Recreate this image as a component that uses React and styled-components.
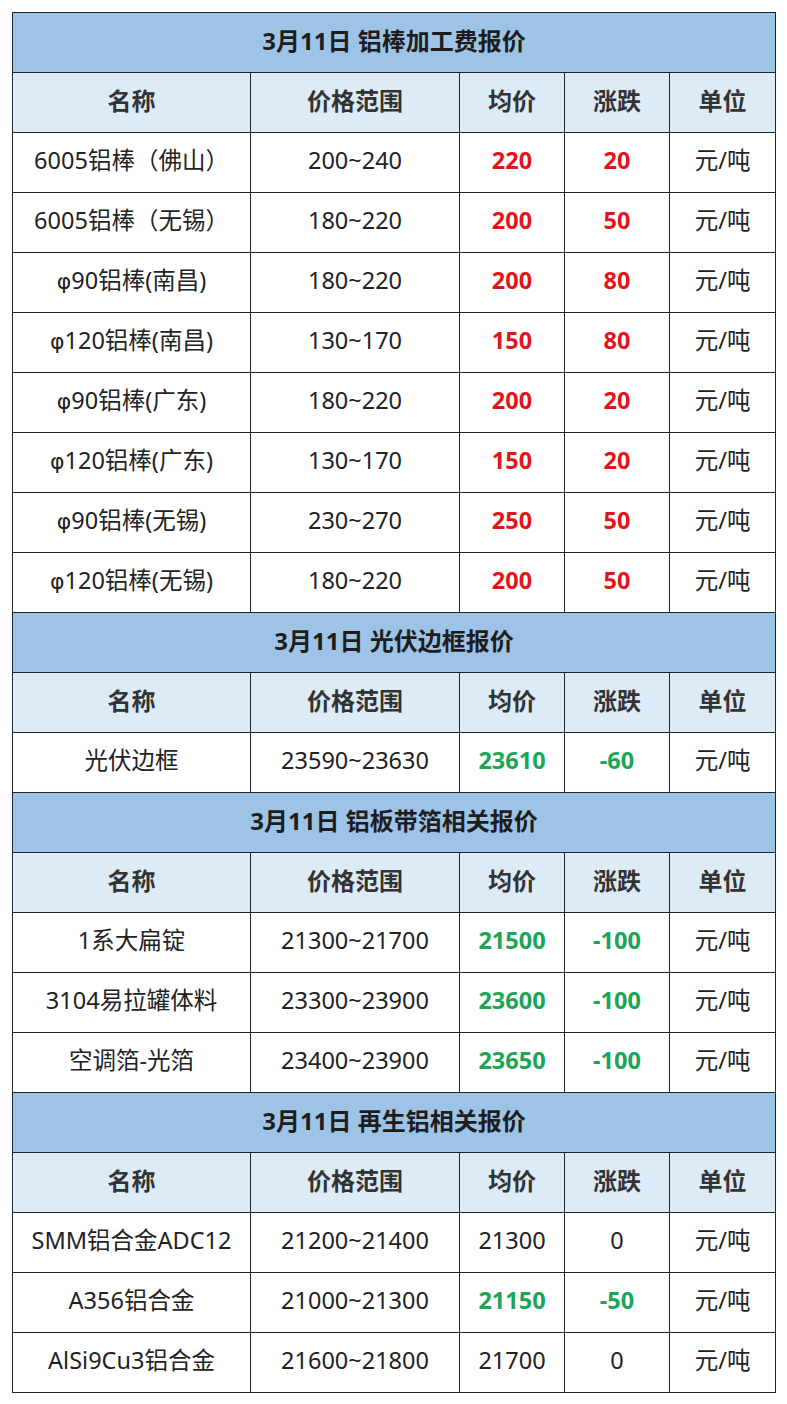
import React from "react";
import styled, { createGlobalStyle } from "styled-components";

const sections = [
  {
    title: "3月11日 铝棒加工费报价",
    rows: [
      ["6005铝棒（佛山）", "200~240", "220", "20", "up"],
      ["6005铝棒（无锡）", "180~220", "200", "50", "up"],
      ["φ90铝棒(南昌)", "180~220", "200", "80", "up"],
      ["φ120铝棒(南昌)", "130~170", "150", "80", "up"],
      ["φ90铝棒(广东)", "180~220", "200", "20", "up"],
      ["φ120铝棒(广东)", "130~170", "150", "20", "up"],
      ["φ90铝棒(无锡)", "230~270", "250", "50", "up"],
      ["φ120铝棒(无锡)", "180~220", "200", "50", "up"],
    ],
  },
  {
    title: "3月11日 光伏边框报价",
    rows: [["光伏边框", "23590~23630", "23610", "-60", "down"]],
  },
  {
    title: "3月11日 铝板带箔相关报价",
    rows: [
      ["1系大扁锭", "21300~21700", "21500", "-100", "down"],
      ["3104易拉罐体料", "23300~23900", "23600", "-100", "down"],
      ["空调箔-光箔", "23400~23900", "23650", "-100", "down"],
    ],
  },
  {
    title: "3月11日 再生铝相关报价",
    rows: [
      ["SMM铝合金ADC12", "21200~21400", "21300", "0", "flat"],
      ["A356铝合金", "21000~21300", "21150", "-50", "down"],
      ["AlSi9Cu3铝合金", "21600~21800", "21700", "0", "flat"],
    ],
  },
];

const headers = ["名称", "价格范围", "均价", "涨跌", "单位"];

const GlobalStyle = createGlobalStyle`
  body {
    margin: 0;
    background: #ffffff;
    font-family: "Noto Sans", "Noto Sans CJK SC", sans-serif;
  }
`;

const Page = styled.div`
  padding: 12px 0 0 12px;
`;

const Table = styled.table`
  border-collapse: collapse;
  table-layout: fixed;
  width: 763px;
  color: #222;
`;

const Cell = styled.td`
  height: 55px;
  padding: 0 0 4px;
  border: 1px solid #1c2530;
  text-align: center;
  vertical-align: middle;
  font-size: 23.5px;
  line-height: 1;
  white-space: nowrap;
  font-weight: ${(p) => (p.$bold ? 700 : 400)};
  color: ${(p) =>
    p.$trend === "up" ? "#e3141b" : p.$trend === "down" ? "#1aa557" : "#222"};
`;

const TitleCell = styled(Cell)`
  background: #9dc3e6;
  font-size: 24px;
  font-weight: 700;
  color: #1d1d1d;
`;

const HeadCell = styled(Cell)`
  background: #ddebf7;
  font-size: 24px;
  font-weight: 700;
  color: #333;
`;

// open-loop phi like the source font
const Phi = styled.span`
  font-family: "DejaVu Sans", sans-serif;
  font-size: 22px;
`;

const widths = [238, 209, 105, 105, 106];

const Name = ({ text }) =>
  text.startsWith("φ") ? (
    <>
      <Phi>φ</Phi>
      {text.slice(1)}
    </>
  ) : (
    text
  );

export default function App() {
  return (
    <Page>
      <GlobalStyle />
      <Table>
        <colgroup>
          {widths.map((w, i) => (
            <col key={i} style={{ width: w }} />
          ))}
        </colgroup>
        <tbody>
          {sections.map((s) => (
            <React.Fragment key={s.title}>
              <tr>
                <TitleCell colSpan={5}>{s.title}</TitleCell>
              </tr>
              <tr>
                {headers.map((h) => (
                  <HeadCell key={h}>{h}</HeadCell>
                ))}
              </tr>
              {s.rows.map(([name, range, avg, diff, trend]) => (
                <tr key={name}>
                  <Cell>
                    <Name text={name} />
                  </Cell>
                  <Cell>{range}</Cell>
                  <Cell $trend={trend} $bold={trend !== "flat"}>
                    {avg}
                  </Cell>
                  <Cell $trend={trend} $bold={trend !== "flat"}>
                    {diff}
                  </Cell>
                  <Cell>元/吨</Cell>
                </tr>
              ))}
            </React.Fragment>
          ))}
        </tbody>
      </Table>
    </Page>
  );
}
